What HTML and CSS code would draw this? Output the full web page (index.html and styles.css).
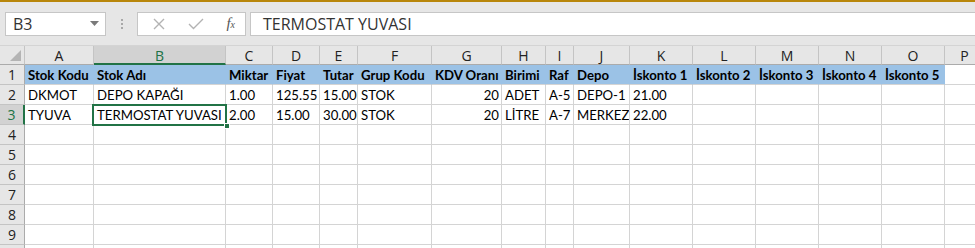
FILE: index.html
```html
<!DOCTYPE html>
<html lang="tr">
<head>
  <meta charset="UTF-8">
  <title>Stok Listesi</title>
  <link rel="stylesheet" href="styles.css">
</head>
<body>
  <div class="topline"></div>
  <!-- Ad kutusu ve formül çubuğu -->
  <div class="formula-bar">
    <div class="namebox">
      <span>B3</span>
      <svg class="caret" width="9" height="5" viewBox="0 0 9 5"><path d="M0 0h9L4.5 5z" fill="#7a7a7a"/></svg>
    </div>
    <div class="grip"><i></i><i></i><i></i></div>
    <div class="fx-buttons">
      <svg width="12" height="12" viewBox="0 0 12 12"><path d="M1 1l10 10M11 1L1 11" stroke="#b3b3b3" stroke-width="1.4" fill="none"/></svg>
      <svg width="16" height="12" viewBox="0 0 16 12"><path d="M1 6l4.5 4.5L15 1" stroke="#b3b3b3" stroke-width="1.4" fill="none"/></svg>
      <span class="fx">f<sub>x</sub></span>
    </div>
    <div class="formula-input">TERMOSTAT YUVASI</div>
  </div>

  <!-- Çalışma sayfası -->
  <div class="sheet" id="sheet">
    <div class="hd corner"><svg width="11" height="11" viewBox="0 0 11 11"><path d="M11 0v11H0z" fill="#b4b4b4"/></svg></div>
    <div class="hd">A</div>
    <div class="hd active">B</div>
    <div class="hd">C</div>
    <div class="hd">D</div>
    <div class="hd">E</div>
    <div class="hd">F</div>
    <div class="hd">G</div>
    <div class="hd">H</div>
    <div class="hd">I</div>
    <div class="hd">J</div>
    <div class="hd">K</div>
    <div class="hd">L</div>
    <div class="hd">M</div>
    <div class="hd">N</div>
    <div class="hd">O</div>
    <div class="hd last">P</div>

    <div class="rh">1</div>
    <div class="c head">Stok Kodu</div>
    <div class="c head">Stok Adı</div>
    <div class="c head">Miktar</div>
    <div class="c head">Fiyat</div>
    <div class="c head">Tutar</div>
    <div class="c head">Grup Kodu</div>
    <div class="c head">KDV Oranı</div>
    <div class="c head">Birimi</div>
    <div class="c head">Raf</div>
    <div class="c head">Depo</div>
    <div class="c head">İskonto 1</div>
    <div class="c head">İskonto 2</div>
    <div class="c head">İskonto 3</div>
    <div class="c head">İskonto 4</div>
    <div class="c head">İskonto 5</div>
    <div class="c"></div>

    <div class="rh">2</div>
    <div class="c">DKMOT</div>
    <div class="c">DEPO KAPAĞI</div>
    <div class="c">1.00</div>
    <div class="c">125.55</div>
    <div class="c">15.00</div>
    <div class="c">STOK</div>
    <div class="c num">20</div>
    <div class="c">ADET</div>
    <div class="c">A-5</div>
    <div class="c">DEPO-1</div>
    <div class="c">21.00</div>
    <div class="c"></div><div class="c"></div><div class="c"></div><div class="c"></div><div class="c"></div>

    <div class="rh active">3</div>
    <div class="c">TYUVA</div>
    <div class="c">TERMOSTAT YUVASI</div>
    <div class="c">2.00</div>
    <div class="c">15.00</div>
    <div class="c">30.00</div>
    <div class="c">STOK</div>
    <div class="c num">20</div>
    <div class="c">LİTRE</div>
    <div class="c">A-7</div>
    <div class="c">MERKEZ</div>
    <div class="c">22.00</div>
    <div class="c"></div><div class="c"></div><div class="c"></div><div class="c"></div><div class="c"></div>

    <div class="selection"><span class="handle"></span></div>
  </div>

  <script>
    // Boş satırlar 4-10
    const sheet = document.getElementById('sheet');
    const sel = sheet.querySelector('.selection');
    for (let r = 4; r <= 10; r++) {
      let html = '<div class="rh">' + r + '</div>';
      for (let c = 0; c < 16; c++) html += '<div class="c"></div>';
      sel.insertAdjacentHTML('beforebegin', html);
    }
  </script>
</body>
</html>
```

FILE: styles.css
```css
* {
  box-sizing: border-box;
  margin: 0;
  padding: 0;
}
body {
  width: 975px;
  height: 248px;
  overflow: hidden;
  background: #fff;
  font-family: 'Open Sans', 'Noto Sans', sans-serif;
}
.topline {
  height: 2px;
  background: #b8860b;
}
/* Formül çubuğu */
.formula-bar {
  display: flex;
  align-items: center;
  height: 44px;
  padding: 9px 0 9px 5px;
  background: #e6e6e6;
  border-bottom: 1px solid #d4d4d4;
}
.namebox {
  display: flex;
  align-items: center;
  justify-content: space-between;
  width: 101px;
  height: 24px;
  padding: 0 6px 0 7px;
  background: #fff;
  border: 1px solid #c6c6c6;
  font-size: 16px;
  color: #333;
}
.grip {
  display: flex;
  flex-direction: column;
  gap: 2px;
  margin: 0 14px 0 15px;
}
.grip i {
  display: block;
  width: 2px;
  height: 2px;
  background: #a8a8a8;
}
.fx-buttons {
  display: flex;
  align-items: center;
  justify-content: space-between;
  width: 109px;
  height: 24px;
  padding: 0 10px 0 15px;
  background: #fff;
  border: 1px solid #c6c6c6;
}
.fx {
  font-family: 'Liberation Serif', serif;
  font-style: italic;
  font-size: 15px;
  color: #555;
  line-height: 1;
}
.fx sub {
  font-size: 10px;
  vertical-align: 0;
}
.formula-input {
  flex: 1;
  height: 24px;
  margin-left: 4px;
  padding-left: 12px;
  background: #fff;
  border: 1px solid #c6c6c6;
  border-right: none;
  font-size: 16px;
  line-height: 22px;
  color: #333;
}
/* Sayfa ızgarası */
.sheet {
  position: relative;
  display: grid;
  grid-template-columns: 25px 69px 132px 47px 47px 38px 74px 70px 44px 28px 56px 63px 63px 63px 63px 63px 40px;
  grid-template-rows: 19px;
  grid-auto-rows: 20px;
}
.hd {
  background: #e6e6e6;
  border-right: 1px solid #c4c4c4;
  border-bottom: 1px solid #ababab;
  text-align: center;
  font-size: 14px;
  line-height: 19px;
  color: #222;
}
.hd.corner {
  display: flex;
  align-items: flex-end;
  justify-content: flex-end;
  padding: 0 3px 3px 0;
}
.hd.active {
  background: #d2d2d2;
  border-bottom: 2px solid #217346;
  color: #217346;
}
.rh {
  background: #e6e6e6;
  border-right: 1px solid #ababab;
  border-bottom: 1px solid #c4c4c4;
  text-align: center;
  font-size: 14px;
  line-height: 20px;
  color: #222;
}
.rh.active {
  background: #d2d2d2;
  border-right: 2px solid #217346;
  color: #217346;
}
.c {
  border-right: 1px solid #d4d4d4;
  border-bottom: 1px solid #d4d4d4;
  padding: 0 2px 0 3px;
  font-family: Lato, 'Liberation Sans', sans-serif;
  font-size: 13.2px;
  line-height: 21px;
  color: #000;
  white-space: nowrap;
  overflow: hidden;
}
.c.head {
  background: #9bc2e6;
  border-right-color: #9bc2e6;
  font-weight: bold;
}
.c.num {
  text-align: right;
}
.selection {
  position: absolute;
  left: 92px;
  top: 58px;
  width: 135px;
  height: 22px;
  border: 2px solid #217346;
}
.handle {
  position: absolute;
  right: -5px;
  bottom: -5px;
  width: 6px;
  height: 6px;
  background: #217346;
  border: 1px solid #fff;
}
```
